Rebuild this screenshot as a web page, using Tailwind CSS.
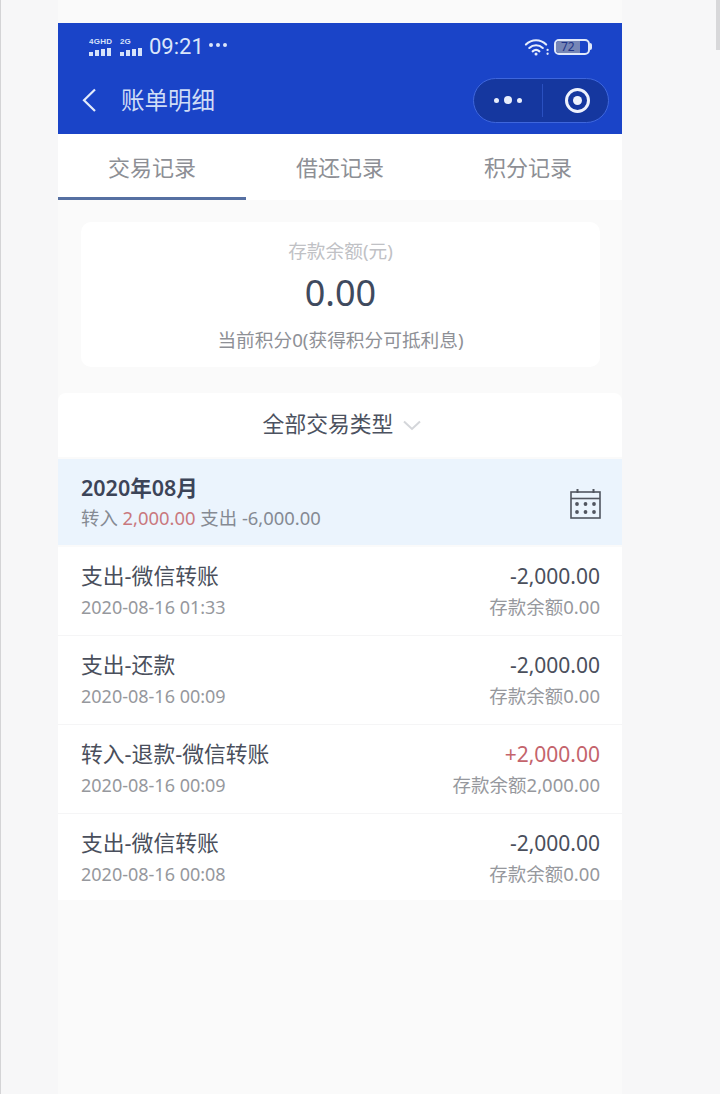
<!DOCTYPE html>
<html lang="zh-CN">
<head>
    <meta charset="UTF-8">
    <meta name="viewport" content="width=device-width, initial-scale=1.0">
    <title>账单明细</title>
    <script src="https://cdn.jsdelivr.net/npm/@tailwindcss/browser@4"></script>
</head>
<body class="relative h-[1094px] w-[720px] overflow-hidden border-l border-l-[#d4d4d6] bg-[#f7f7f8] pl-[57px] font-['Noto_Sans','Noto_Sans_CJK_SC',sans-serif]">
    <!-- scrollbar sliver on the right edge -->
    <div class="absolute top-0 right-0 h-[50px] w-[4px] bg-[#d8d8da]"></div>

    <div class="h-[1094px] w-[564px] bg-[#fafafa] pt-[23px]">
        <!-- Header -->
        <div class="h-[111px] bg-[#1a44c8] text-[#dbe6fa]">
            <div class="flex h-[47px] items-center justify-between pr-[30px] pl-[31px]">
                <div class="flex items-center">
                    <svg width="24" height="20" viewBox="0 0 24 20" fill="#d6e2fa">
                        <text x="0" y="7" font-size="8" font-weight="700" font-family="Liberation Sans" textLength="23">4GHD</text>
                        <rect x="0" y="15" width="4" height="4"/><rect x="6" y="13" width="4" height="6"/><rect x="12" y="12" width="4" height="7"/><rect x="18" y="11" width="4" height="8"/>
                    </svg>
                    <svg class="ml-[7px]" width="24" height="20" viewBox="0 0 24 20" fill="#d6e2fa">
                        <text x="0" y="7" font-size="8" font-weight="700" font-family="Liberation Sans">2G</text>
                        <rect x="0" y="15" width="4" height="4"/><rect x="6" y="13" width="4" height="6"/><rect x="12" y="12" width="4" height="7"/><rect x="18" y="11" width="4" height="8"/>
                    </svg>
                    <span class="ml-[5px] text-[22px] leading-none font-['Roboto',sans-serif]">09:21</span>
                    <span class="ml-[5px] flex gap-[3px] pb-[3px]">
                        <i class="size-[4px] rounded-full bg-[#dbe6fa]"></i><i class="size-[4px] rounded-full bg-[#dbe6fa]"></i><i class="size-[4px] rounded-full bg-[#dbe6fa]"></i>
                    </span>
                </div>
                <div class="flex items-center">
                    <svg width="26" height="20" viewBox="0 0 27 20" fill="none" stroke="#e6edfc" stroke-width="2.2" stroke-linecap="round">
                        <path d="M2 7.5C8 1.5 17 1.5 23 7.5"/>
                        <path d="M5.5 11C9.5 7.2 15.5 7.2 19.5 11"/>
                        <path d="M9 14.5C11 12.8 14 12.8 16 14.5"/>
                        <circle cx="12.5" cy="17.3" r="1.6" fill="#e6edfc" stroke="none"/>
                        <circle cx="24.5" cy="13" r="1.2" fill="#e6edfc" stroke="none"/>
                        <circle cx="24.5" cy="17" r="1.2" fill="#e6edfc" stroke="none"/>
                    </svg>
                    <div class="ml-[4px] flex items-center">
                        <div class="h-[16px] w-[36px] rounded-[5px] border-2 border-[#e0e8fa]">
                            <div class="flex h-full w-[74%] items-center justify-center rounded-l-[3px] bg-[#7686b6] text-[12px] leading-none text-[#1f3488]">72</div>
                        </div>
                        <div class="h-[7px] w-[2px] rounded-r bg-[#e0e8fa]"></div>
                    </div>
                </div>
            </div>
            <div class="flex h-[64px] items-center justify-between pr-[13px] pb-[4px] pl-[24px]">
                <div class="flex items-center">
                    <svg width="15" height="24" viewBox="0 0 15 24" fill="none" stroke="#e3ebfb" stroke-width="2.2">
                        <path d="M13 1.5L2 12.2L13 23"/>
                    </svg>
                    <span class="ml-[24px] pt-[2px] text-[23.5px] leading-none text-[#cfdcf6]">账单明细</span>
                </div>
                <div class="flex h-[45px] w-[136px] items-center rounded-full border border-[#3e66dc] bg-[#15379f]">
                    <div class="flex w-[68px] items-center justify-center gap-[5px]">
                        <i class="size-[5px] rounded-full bg-[#e8eefc]"></i><i class="size-[8px] rounded-full bg-[#e8eefc]"></i><i class="size-[5px] rounded-full bg-[#e8eefc]"></i>
                    </div>
                    <div class="h-[33px] w-px bg-[#2a50c0]"></div>
                    <div class="flex flex-1 items-center justify-center pl-[3px]">
                        <div class="flex size-[25px] items-center justify-center rounded-full border-[3px] border-[#eef2fd]">
                            <i class="size-[9px] rounded-full bg-[#eef2fd]"></i>
                        </div>
                    </div>
                </div>
            </div>
        </div>

        <!-- Tabs -->
        <div class="flex h-[66px] bg-white text-[22px] leading-none text-[#8d8f95]">
            <div class="flex flex-1 items-center justify-center border-b-[3px] border-[#5670a2] pt-[2px]">交易记录</div>
            <div class="flex flex-1 items-center justify-center pb-[1px]">借还记录</div>
            <div class="flex flex-1 items-center justify-center pb-[1px]">积分记录</div>
        </div>

        <!-- Balance card -->
        <div class="mx-[23px] mt-[22px] flex h-[145px] w-[519px] flex-col items-center rounded-[10px] bg-white pt-[18px]">
            <div class="text-[18.7px] leading-[21px] text-[#c0c1c5]">存款余额(元)</div>
            <div class="mt-[12px] text-[36px] leading-[40px] text-[#3f4a5e]">0.00</div>
            <div class="mt-[15px] text-[18.7px] leading-[24px] text-[#8e9096]">当前积分0(获得积分可抵利息)</div>
        </div>

        <!-- Type filter -->
        <div class="mt-[26px] flex h-[64px] items-center justify-center rounded-t-[8px] bg-white pl-[4px]">
            <span class="pb-[2px] text-[21.8px] leading-none text-[#4c5260]">全部交易类型</span>
            <svg class="ml-[10px]" width="18" height="11" viewBox="0 0 18 11" fill="none" stroke="#d4d6da" stroke-width="2">
                <path d="M1 1.5L9 9L17 1.5"/>
            </svg>
        </div>

        <!-- Month header -->
        <div class="mt-[2px] flex h-[86px] items-center justify-between bg-[#ebf4fd] pt-[2px] pr-[21px] pl-[23px]">
            <div>
                <div class="text-[21.5px] leading-[30px] font-semibold text-[#3c4458]">2020年08月</div>
                <div class="text-[18.4px] leading-[30px] text-[#858a93]">
                    转入 <span class="text-[#c9787e]">2,000.00</span> 支出 -6,000.00
                </div>
            </div>
            <svg width="31" height="31" viewBox="0 0 31 31" fill="none" stroke="#51555f" stroke-width="1.6">
                <rect x="1" y="4" width="29" height="26"/>
                <path d="M1 10.5H30"/>
                <path d="M7.5 1V5M23.5 1V5" stroke-width="2"/>
                <g fill="#51555f" stroke="none">
                    <circle cx="7" cy="16" r="1.9"/><circle cx="15.5" cy="16" r="1.9"/><circle cx="24" cy="16" r="1.9"/>
                    <circle cx="7" cy="24" r="1.9"/><circle cx="15.5" cy="24" r="1.9"/><circle cx="24" cy="24" r="1.9"/>
                </g>
            </svg>
        </div>

        <!-- Transactions -->
        <div class="mt-[2px] bg-white">
            <div class="flex h-[89px] items-start justify-between border-b border-[#f5f5f6] pt-[14px] pr-[22px] pl-[23px]">
                <div>
                    <div class="text-[21.8px] leading-[30px] text-[#4a4f5c]">支出-微信转账</div>
                    <div class="mt-[3px] text-[18px] leading-[26px] text-[#96989d]">2020-08-16 01:33</div>
                </div>
                <div class="text-right">
                    <div class="text-[21px] leading-[30px] text-[#4a4f5c]">-2,000.00</div>
                    <div class="mt-[3px] text-[18.5px] leading-[26px] text-[#96989d]">存款余额0.00</div>
                </div>
            </div>
            <div class="flex h-[89px] items-start justify-between border-b border-[#f5f5f6] pt-[14px] pr-[22px] pl-[23px]">
                <div>
                    <div class="text-[21.8px] leading-[30px] text-[#4a4f5c]">支出-还款</div>
                    <div class="mt-[3px] text-[18px] leading-[26px] text-[#96989d]">2020-08-16 00:09</div>
                </div>
                <div class="text-right">
                    <div class="text-[21px] leading-[30px] text-[#4a4f5c]">-2,000.00</div>
                    <div class="mt-[3px] text-[18.5px] leading-[26px] text-[#96989d]">存款余额0.00</div>
                </div>
            </div>
            <div class="flex h-[89px] items-start justify-between border-b border-[#f5f5f6] pt-[14px] pr-[22px] pl-[23px]">
                <div>
                    <div class="text-[21.8px] leading-[30px] text-[#4a4f5c]">转入-退款-微信转账</div>
                    <div class="mt-[3px] text-[18px] leading-[26px] text-[#96989d]">2020-08-16 00:09</div>
                </div>
                <div class="text-right">
                    <div class="text-[21px] leading-[30px] text-[#c4646c]">+2,000.00</div>
                    <div class="mt-[3px] text-[18.5px] leading-[26px] text-[#96989d]">存款余额2,000.00</div>
                </div>
            </div>
            <div class="flex h-[86px] items-start justify-between pt-[14px] pr-[22px] pl-[23px]">
                <div>
                    <div class="text-[21.8px] leading-[30px] text-[#4a4f5c]">支出-微信转账</div>
                    <div class="mt-[3px] text-[18px] leading-[26px] text-[#96989d]">2020-08-16 00:08</div>
                </div>
                <div class="text-right">
                    <div class="text-[21px] leading-[30px] text-[#4a4f5c]">-2,000.00</div>
                    <div class="mt-[3px] text-[18.5px] leading-[26px] text-[#96989d]">存款余额0.00</div>
                </div>
            </div>
        </div>
    </div>
</body>
</html>
